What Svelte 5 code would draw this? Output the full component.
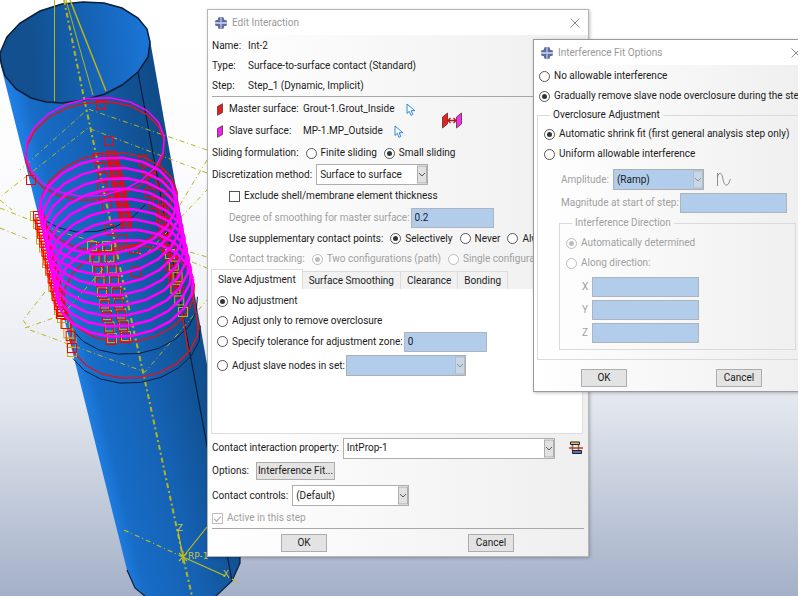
<script>
  let sliding = $state('small');
  let method = $state('Surface to surface');
  let supplementary = $state('selectively');
  let tracking = $state('two');
  let adjustment = $state('none');
  let removal = $state('gradual');
  let overclosure = $state('auto');
  let direction = $state('auto');

  const tabs = ['Slave Adjustment', 'Surface Smoothing', 'Clearance', 'Bonding'];
  let activeTab = $state('Slave Adjustment');

  // Faceted, slightly tilted ring as drawn by a mesh viewport
  function ring(cx, cy, rx, ry, tilt = -0.14, from = 0, to = 360) {
    const pts = [];
    for (let a = from; a <= to; a += 18) {
      const t = (a * Math.PI) / 180;
      const x = rx * Math.cos(t);
      const y = ry * Math.sin(t);
      const px = cx + x * Math.cos(tilt) - y * Math.sin(tilt);
      const py = cy + x * Math.sin(tilt) + y * Math.cos(tilt);
      pts.push(`${px.toFixed(1)},${py.toFixed(1)}`);
    }
    return pts.join(' ');
  }

  const coils = Array.from({ length: 9 }, (_, i) => ring(108 + i * 2.1, 206 + i * 10.3, 69, 48));

  function column(x0, y0, x1, y1, n, color, jitter = 2) {
    return Array.from({ length: n }, (_, i) => ({
      x: x0 + ((x1 - x0) * i) / (n - 1) + ((i * 7) % 3) * jitter - jitter,
      y: y0 + ((y1 - y0) * i) / (n - 1),
      color
    }));
  }

  const yellow = '#b9b41c';
  const red = '#ff0000';
  const marks = [
    ...column(36, 216, 62, 318, 14, yellow, 1),
    ...column(39, 216, 62, 314, 34, red, 1),
    ...column(66, 324, 73, 352, 4, yellow, 1),
    ...column(63, 312, 73, 348, 4, red, 1),
    ...column(99, 158, 106, 206, 6, red, 1),
    ...column(112, 156, 127, 226, 26, red, 1),
    ...column(145, 160, 154, 204, 5, red, 2),
    ...column(162, 174, 166, 212, 4, red, 2),
    ...column(160, 204, 177, 292, 18, red, 2),
    ...column(172, 254, 181, 312, 6, yellow, 2),
    ...column(92, 246, 112, 338, 9, yellow, 0),
    ...column(95, 248, 111, 340, 9, red, 0),
    ...column(107, 246, 126, 336, 9, yellow, 0),
    ...column(109, 248, 125, 338, 9, red, 0),
    ...column(112, 230, 132, 249, 3, red, 2),
    { x: 101, y: 105, color: red },
    { x: 109, y: 141, color: red },
    { x: 31, y: 180, color: red },
    { x: 136, y: 272, color: red }
  ];

  const guides = [
    '207,150 88,109 20,170',
    '207,173 88,128 0,197',
    '207,160 178,208',
    '0,200 12,210',
    '0,208 60,232 145,255 207,190',
    '0,228 30,240',
    '45,292 23,320 30,330 145,372 207,300',
    '25,328 62,315 120,250',
    '190,252 207,257',
    '192,262 207,268'
  ];
</script>

{#snippet logo()}
  <svg class="logo" viewBox="0 0 14 14" aria-hidden="true">
    <path d="M4 1h6v2l1 1h2v6h-2l-1 1v2H4v-2l-1-1H1V4h2l1-1z" fill="#b9c0dc" />
    <path d="M4 2.500 6.300.8V6H.8L2.500 4H4zM7.700.8 10 2.500V4h1.500L13.200 6H7.700zM.8 8h5.500v5.200L4 11.500V10H2.500zM7.700 8h5.500L11.500 10H10v1.500l-2.300 1.700z" fill="#5c6ca3" />
  </svg>
{/snippet}

{#snippet titlebar(text)}
  <header class="titlebar">
    {@render logo()}
    <h2>{text}</h2>
    <button class="close" aria-label="Close">
      <svg viewBox="0 0 10 10" aria-hidden="true"><path d="M.5.5l9 9M9.500.5l-9 9" stroke="#8c8c8c" fill="none" /></svg>
    </button>
  </header>
{/snippet}

{#snippet arrow()}
  <svg class="arrow" viewBox="0 0 10 18" aria-hidden="true">
    <rect x=".5" y=".5" width="9" height="17" fill="#e1e1e1" stroke="#adadad" />
    <path d="M2 7.500l3 3 3-3" fill="none" stroke="#555" />
  </svg>
{/snippet}

{#snippet cursor()}
  <svg class="cursor" viewBox="0 0 10 13" aria-hidden="true">
    <path d="M1 1v9.500l2.300-2.200 1.700 4 1.800-.8-1.700-3.800H8.800z" fill="#fff" stroke="#2e86e0" />
  </svg>
{/snippet}

{#snippet face(fill)}
  <svg class="face" viewBox="0 0 6 13" aria-hidden="true">
    <path d="M.5 3.500 5.500.7v8.800L.5 12.300z" {fill} stroke="#5a3030" stroke-width=".8" />
  </svg>
{/snippet}

<div class="desktop">
  <svg class="viewport" viewBox="0 0 260 596" role="img" aria-label="Pipe model with contact surfaces">
    <defs>
      <linearGradient id="shell" gradientUnits="userSpaceOnUse" x1="52" y1="266" x2="188" y2="234">
        <stop offset="0" stop-color="#1f7ee2" />
        <stop offset=".12" stop-color="#176cc6" />
        <stop offset=".5" stop-color="#1561b2" />
        <stop offset=".82" stop-color="#115193" />
        <stop offset="1" stop-color="#104c8a" />
      </linearGradient>
      <linearGradient id="bore" gradientUnits="userSpaceOnUse" x1="0" y1="55" x2="150" y2="40">
        <stop offset=".2" stop-color="#12508f" />
        <stop offset=".6" stop-color="#1562b4" />
        <stop offset="1" stop-color="#1b76d8" />
      </linearGradient>
    </defs>

    <path d="M1 66 127 570l8 18 11 9h69l17-16 8-18v-10L201 330 150 40z" fill="url(#shell)" />
    <path d="M127 570l8 18 11 9M215 597l17-16 8-18v-8M138 72l94 509" fill="none" stroke="#0b1e38" stroke-width="1.200" />
    <path
      d="M0 53 7 37 20 23 40 11 62 4 83 2 104 3l18 5 16 10 9 11 3 13-2 15-10 15-16 13-17 9-21 6-22 3-16-1-15-4-15-9L5 76 1 63z"
      fill="url(#bore)" stroke="#0b1e38" stroke-width="1.500" />

    <g fill="none" stroke="#b9b41c">
      <path d="M54.500 0v101M66 0l27 95" />
      <path d="M70 0l36 91" stroke-width="1.500" />
      {#each guides as points}
        <polyline {points} stroke-dasharray="5 3 1 3" />
      {/each}
      <path d="M64 0 84 98l18 84L127 300l20 90 36 167 9 39" stroke-width="2" stroke-dasharray="5 3 2 3" />
    </g>

    <g fill="none" stroke="#0b1e38">
      <polyline points={ring(90, 184, 64, 48, -0.14, 36, 144)} />
      <polyline points={ring(132, 306, 66, 48, -0.14, 0, 162)} />
      <polyline points={ring(134, 335, 67, 48, -0.14, 0, 162)} />
    </g>
    <g fill="none" stroke="#e0141e" stroke-width="1.400">
      <polyline points={ring(95, 151, 70, 49)} />
      <polyline points={ring(109, 202, 69, 49)} />
      <polyline points={ring(129, 294, 66, 48)} />
      <polyline points={ring(134, 330, 65, 48, -0.14, 0, 180)} />
      <path d="M71 320v24M182 312l6 38M192 290l7 40" />
    </g>

    <g fill="none" stroke-width="1">
      {#each marks as mark}
        <rect x={mark.x - 4.5} y={mark.y - 4.5} width="9" height="9" stroke={mark.color} />
      {/each}
    </g>

    <g fill="none" stroke="#ff00ff">
      <polyline points={ring(95, 147, 70, 49)} stroke-width="1.500" />
      {#each coils as points}
        <polyline {points} stroke-width="2.600" />
      {/each}
    </g>

    <g fill="none" stroke="#c2bc1c" stroke-width="1.200">
      <path d="M183 557l-5-26M183 557l24-30M183 557l38 17" />
      <path d="M124 530l59 27M221 574l21 10" stroke-dasharray="5 3 1 3" />
      <path d="M179 553l8 8M187 553l-8 8M183 551v12" />
    </g>
    <g class="axis">
      <text x="177" y="531">Z</text>
      <text x="223" y="577">X</text>
      <text x="188" y="559" class="ref">RP-1</text>
    </g>
  </svg>

  <section class="dialog edit">
    {@render titlebar('Edit Interaction')}
    <dl class="meta">
      <div><dt>Name:</dt><dd>Int-2</dd></div>
      <div><dt>Type:</dt><dd>Surface-to-surface contact (Standard)</dd></div>
      <div><dt>Step:</dt><dd>Step_1 (Dynamic, Implicit)</dd></div>
    </dl>
    <hr />

    <div class="surfaces">
      <div class="pair">
        <div class="row tall">
          {@render face('#e02020')}<span class="surface">Master surface:</span><span>Grout-1.Grout_Inside</span>
          <button class="tool" aria-label="Pick master surface">{@render cursor()}</button>
        </div>
        <div class="row tall">
          {@render face('#f020f0')}<span class="surface">Slave surface:</span><span>MP-1.MP_Outside</span>
          <button class="tool" aria-label="Pick slave surface">{@render cursor()}</button>
        </div>
      </div>
      <button class="tool" aria-label="Switch surfaces">
        <svg class="swap" viewBox="0 0 20 17" aria-hidden="true">
          <path d="M.5 5 5.500 1v11L.5 16z" fill="#e82020" stroke="#5a3030" stroke-width=".8" />
          <path d="M14.500 5l5-4v11l-5 4z" fill="#f030f0" stroke="#5a3030" stroke-width=".8" />
          <path d="M6 8.500h8M8.500 6 6 8.500 8.500 11M11.500 6 14 8.500 11.500 11" fill="none" stroke="#b01818" stroke-width="1.300" />
        </svg>
      </button>
    </div>

    <div class="row tall choices">
      <span>Sliding formulation:</span>
      <label><input type="radio" bind:group={sliding} value="finite" />Finite sliding</label>
      <label><input type="radio" bind:group={sliding} value="small" />Small sliding</label>
    </div>
    <div class="row">
      <label for="method">Discretization method:</label>
      <div class="combo method">
        <select id="method" bind:value={method}><option>Surface to surface</option><option>Node to surface</option></select>
        {@render arrow()}
      </div>
    </div>
    <div class="row tall inset"><label><input type="checkbox" />Exclude shell/membrane element thickness</label></div>
    <div class="row inset tight">
      <label for="smoothing" class="off">Degree of smoothing for master surface:</label>
      <input id="smoothing" class="field short" type="text" value="0.2" disabled />
    </div>
    <div class="row inset choices">
      <span>Use supplementary contact points:</span>
      <label><input type="radio" bind:group={supplementary} value="selectively" />Selectively</label>
      <label><input type="radio" bind:group={supplementary} value="never" />Never</label>
      <label><input type="radio" bind:group={supplementary} value="always" />Always</label>
    </div>
    <div class="row inset off low choices">
      <span>Contact tracking:</span>
      <label><input type="radio" bind:group={tracking} value="two" disabled />Two configurations (path)</label>
      <label><input type="radio" bind:group={tracking} value="single" disabled />Single configuration (state)</label>
    </div>

    <div class="tabs" role="tablist">
      {#each tabs as tab}
        <button role="tab" aria-selected={tab === activeTab} onclick={() => (activeTab = tab)}>{tab}</button>
      {/each}
    </div>
    <div class="panel" role="tabpanel">
      <div class="row low"><label><input type="radio" bind:group={adjustment} value="none" />No adjustment</label></div>
      <div class="row low"><label><input type="radio" bind:group={adjustment} value="remove" />Adjust only to remove overclosure</label></div>
      <div class="row tight">
        <label><input type="radio" bind:group={adjustment} value="tolerance" />Specify tolerance for adjustment zone:</label>
        <input class="field short" type="text" value="0" aria-label="Tolerance" disabled />
      </div>
      <div class="row high tight">
        <label><input type="radio" bind:group={adjustment} value="set" />Adjust slave nodes in set:</label>
        <div class="combo set">
          <select aria-label="Node set" disabled><option></option></select>
          {@render arrow()}
        </div>
      </div>
    </div>

    <div class="row tall">
      <label for="property">Contact interaction property:</label>
      <div class="combo property">
        <select id="property"><option>IntProp-1</option></select>
        {@render arrow()}
      </div>
      <button class="tool create" aria-label="Create interaction property">
        <svg viewBox="0 0 14 14" aria-hidden="true">
          <path d="M1.500 1h9v2.500h-9z" fill="#e8c070" stroke="#222" />
          <path d="M3.500 4v6M9.500 4v6" stroke="#2f8f80" stroke-width="1.500" />
          <path d="M3.500 9.500h9v3h-9z" fill="#5a70b8" stroke="#222" />
          <path d="M0 7h14" stroke="#e02818" stroke-width="1.500" />
        </svg>
      </button>
    </div>
    <div class="row high choices">
      <span>Options:</span>
      <button class="push wide">Interference Fit...</button>
    </div>
    <div class="row high spaced">
      <label for="controls">Contact controls:</label>
      <div class="combo controls">
        <select id="controls"><option>(Default)</option></select>
        {@render arrow()}
      </div>
    </div>
    <div class="row low off"><label><input type="checkbox" checked disabled />Active in this step</label></div>
    <hr />
    <footer class="actions"><button class="push">OK</button><button class="push">Cancel</button></footer>
  </section>

  <section class="dialog fit">
    {@render titlebar('Interference Fit Options')}
    <div class="row low"><label><input type="radio" bind:group={removal} value="none" />No allowable interference</label></div>
    <div class="row low"><label><input type="radio" bind:group={removal} value="gradual" />Gradually remove slave node overclosure during the step</label></div>
    <fieldset class="outer">
      <legend>Overclosure Adjustment</legend>
      <div class="row low"><label><input type="radio" bind:group={overclosure} value="auto" />Automatic shrink fit (first general analysis step only)</label></div>
      <div class="row low"><label><input type="radio" bind:group={overclosure} value="uniform" />Uniform allowable interference</label></div>
      <div class="uniform">
        <div class="row high">
          <label for="amplitude" class="off">Amplitude:</label>
          <div class="combo amplitude">
            <select id="amplitude" disabled><option>(Ramp)</option></select>
            {@render arrow()}
          </div>
          <svg class="wave" viewBox="0 0 16 15" aria-hidden="true">
            <path d="M1.500 1v13M1.500 5C3 0 5.500 0 6.500 5s2 9 4.500 8 2-4 3.500-6" fill="none" stroke="#8c8c8c" />
          </svg>
        </div>
        <div class="row high tight">
          <label for="magnitude" class="off">Magnitude at start of step:</label>
          <input id="magnitude" class="field long" type="text" disabled />
        </div>
        <fieldset class="inner off" disabled>
          <legend>Interference Direction</legend>
          <div class="row low"><label><input type="radio" bind:group={direction} value="auto" />Automatically determined</label></div>
          <div class="row low"><label><input type="radio" bind:group={direction} value="along" />Along direction:</label></div>
          <div class="vectors">
            {#each ['X', 'Y', 'Z'] as axis}
              <div class="row high">
                <label for={`dir-${axis}`}>{axis}</label>
                <input id={`dir-${axis}`} class="field long" type="text" />
              </div>
            {/each}
          </div>
        </fieldset>
      </div>
    </fieldset>
    <footer class="actions"><button class="push">OK</button><button class="push">Cancel</button></footer>
  </section>
</div>

<style>
  .desktop {
    position: relative;
    min-height: 100vh;
    box-sizing: border-box;
    overflow: hidden;
    border-right: 2px solid #fff;
    background: linear-gradient(#fff 0%, #fdfdfe 25%, #f0f2f6 52%, #e2e6ee 68%, #a3b0c7 100%);
    font: 10px/14px Roboto, 'Open Sans', sans-serif;
    color: #1c1c1c;
  }
  .desktop *, .desktop *::before { box-sizing: border-box; }
  .viewport { position: absolute; left: 0; top: 0; width: 260px; height: 596px; }
  .axis text { fill: #c8c840; font: 10px/12px 'Liberation Mono', monospace; }
  .axis .ref { font: 9px/12px 'DejaVu Sans', sans-serif; }

  .dialog {
    position: absolute;
    border: 1px solid #b4b6ba;
    background: linear-gradient(90deg, #fff, #efefef);
    white-space: nowrap;
    box-shadow: 1px 1px 3px rgb(0 0 0 / 25%);
  }
  .edit { left: 207px; top: 9px; width: 382px; padding: 0 4px 4px; }
  .fit { left: 533px; top: 39px; width: 277px; padding: 0 4px 4px; border-color: #9a9a9a; }

  .titlebar { display: flex; align-items: center; gap: 4px; height: 25px; margin: 0 -4px 1px; padding: 0 8px 0 6px; background: #fff; }
  .titlebar h2 { margin: 0; font: inherit; color: #999; flex: 1; }
  .logo { width: 14px; height: 14px; }
  .close { width: 10px; height: 10px; padding: 0; border: 0; background: none; display: flex; }
  .close svg { width: 10px; height: 10px; }

  .meta { margin: 0; height: 60px; display: flex; flex-direction: column; }
  .meta div { display: flex; flex: 1; align-items: center; }
  dt { width: 36px; }
  dd { margin: 0; }
  hr { margin: 0; border: 0; border-top: 1px solid #a8a8a8; width: 100%; }

  .row { display: flex; align-items: center; gap: 4px; height: 21px; }
  .row.low { height: 20px; }
  .row.tall { height: 22px; }
  .row.high { height: 23px; }
  .row.spaced { margin: 2px 0 1px; }
  .row.tight { gap: 1px; }
  .row.choices { gap: 7px; }
  .inset { padding-left: 17px; }
  label { display: flex; align-items: center; gap: 4px; }
  .off { color: #a0a0a0; }

  .surfaces { display: flex; align-items: center; padding-top: 1px; }
  .pair { width: 230px; padding-left: 5px; }
  .pair .row { gap: 0; }
  .face { width: 6px; height: 13px; margin-right: 6px; }
  .surface { width: 74px; }
  .tool { padding: 0; border: 0; background: none; display: flex; }
  .pair .tool { margin-left: 11px; }
  .cursor { width: 10px; height: 13px; }
  .swap { width: 20px; height: 17px; }

  input[type='radio'], input[type='checkbox'] {
    appearance: none;
    flex: none;
    display: grid;
    place-items: center;
    width: 11px;
    height: 11px;
    margin: 0;
    border: 1px solid #555;
    background: #fff;
  }
  input[type='radio'] { border-radius: 50%; }
  input[type='radio']:checked::before { content: ''; width: 5px; height: 5px; border-radius: 50%; background: #333; }
  input[type='checkbox']:checked::before { content: ''; width: 7px; height: 4px; border: solid #a8a8a8; border-width: 0 0 1px 1px; transform: rotate(-45deg); }
  input[type='radio']:disabled, input[type='checkbox']:disabled { border-color: #bcbcbc; }
  input[type='radio']:disabled::before { background: #bcbcbc; }

  .field {
    height: 20px;
    padding: 0 3px;
    border: 1px solid #aeb4bc;
    border-radius: 0;
    background: #b1cdeb;
    font: inherit;
    color: #1c1c1c;
  }
  .short { width: 83px; }
  .long { width: 107px; }

  .combo { position: relative; height: 21px; }
  .combo select {
    appearance: none;
    display: block;
    width: 100%;
    height: 21px;
    padding: 0 12px 0 3px;
    border: 1px solid #aeaeae;
    border-radius: 0;
    background: #fff;
    font: inherit;
    color: #1c1c1c;
    opacity: 1;
  }
  .combo select:disabled { background: #b1cdeb; }
  .combo select:disabled + .arrow { opacity: 0.5; }
  .arrow { position: absolute; right: 1px; top: 1px; width: 10px; height: 19px; pointer-events: none; }
  .method { width: 112px; }
  .set { width: 120px; }
  .property { width: 212px; }
  .controls { width: 117px; }
  .amplitude { width: 91px; }

  .tabs { display: flex; align-items: flex-end; height: 20px; margin-left: -1px; }
  .tabs button {
    height: 18px;
    padding: 0 6px;
    border: 1px solid #dcdcdc;
    border-width: 1px 1px 0 0;
    background: #f1f1f1;
    font: inherit;
    color: inherit;
  }
  .tabs button[aria-selected='true'] { height: 20px; border-left-width: 1px; background: #fff; }
  .panel { height: 145px; margin: 0 1px 3px -1px; padding: 2px 5px; border: 1px solid #dedede; border-top: 0; background: #fff; }
  .panel .high { margin-top: 2px; }
  .create { margin-left: 10px; }
  .create svg { width: 14px; height: 14px; }

  .push {
    width: 46px;
    height: 18px;
    padding: 0;
    border: 1px solid #adadad;
    background: #e3e3e3;
    font: inherit;
    color: inherit;
  }
  .push.wide { width: 79px; }
  .actions { display: flex; justify-content: space-between; padding: 5px 70px 0 69px; }

  fieldset { min-width: 0; margin: 0; padding: 0; border: 1px solid #dadada; }
  legend { height: 14px; margin-left: 6px; padding: 0 3px; }
  .fit > .row { padding-left: 1px; }
  .outer { margin: 2px 1px 0 -1px; padding: 2px 7px 9px 6px; }
  .uniform { padding: 4px 0 0 15px; }
  .uniform > .row { padding-left: 2px; }
  .inner { margin-top: 2px; padding: 3px 6px 5px; }
  .vectors { padding: 2px 0 0 16px; }
  .wave { width: 16px; height: 15px; margin-left: 8px; }
  .fit .actions { padding: 9px 43px 0 43px; }
</style>
